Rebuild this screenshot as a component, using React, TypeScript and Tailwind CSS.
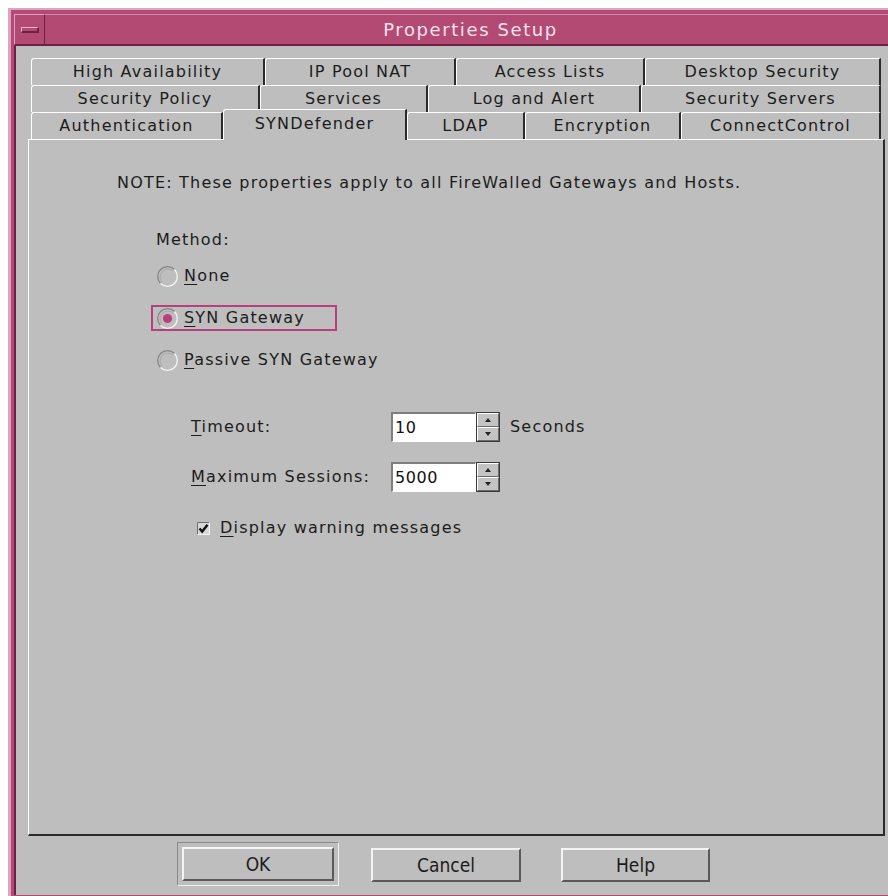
const ui = "font-['DejaVu_Sans',sans-serif]";

type Tab = { label: string; w: string; active?: boolean };

const row1: Tab[] = [
  { label: "High Availability", w: "w-[234px]" },
  { label: "IP Pool NAT", w: "w-[191px]" },
  { label: "Access Lists", w: "w-[189px]" },
  { label: "Desktop Security", w: "w-[236px]" },
];

const row2: Tab[] = [
  { label: "Security Policy", w: "w-[229px]" },
  { label: "Services", w: "w-[168px]" },
  { label: "Log and Alert", w: "w-[213px]" },
  { label: "Security Servers", w: "w-[240px]" },
];

const row3: Tab[] = [
  { label: "Authentication", w: "w-[192px]" },
  { label: "SYNDefender", w: "w-[184px]", active: true },
  { label: "LDAP", w: "w-[118px]" },
  { label: "Encryption", w: "w-[156px]" },
  { label: "ConnectControl", w: "w-[200px]" },
];

const TabButton = ({ tab }: { tab: Tab }) => {
  if (tab.active) {
    return (
      <div
        className={`${tab.w} relative top-[1px] z-10 flex h-[31px] items-center justify-center rounded-tl-[3px] border-l border-t border-r-2 border-l-white border-t-white border-r-[#2b2b2b] bg-[#bebebe] pb-[2px] text-[16px] tracking-[1.2px] text-[#1c1c1c]`}
      >
        {tab.label}
      </div>
    );
  }
  return (
    <div
      className={`${tab.w} flex h-[27px] items-center justify-center rounded-tl-[3px] border-l border-t border-r-2 border-l-white border-t-white border-r-[#2b2b2b] bg-[#bebebe] text-[16px] tracking-[1.2px] text-[#1c1c1c]`}
    >
      {tab.label}
    </div>
  );
};

const Radio = ({ checked }: { checked?: boolean }) => (
  <svg width="21" height="21" viewBox="0 0 21 21" className="shrink-0">
    <path d="M3.5 17.5 A9.9 9.9 0 0 1 17.5 3.5" stroke="#858585" strokeWidth="1.3" fill="none" />
    <path d="M17.5 3.5 A9.9 9.9 0 0 1 3.5 17.5" stroke="#f5f5f5" strokeWidth="1.3" fill="none" />
    <path d="M5 16 A7.8 7.8 0 0 1 16 5" stroke="#a8a8a8" strokeWidth="1" fill="none" />
    {checked && <circle cx="10.5" cy="10.5" r="4.6" fill="#b8407a" />}
  </svg>
);

const SpinBox = ({ value }: { value: string }) => (
  <div className="flex h-[30px]">
    <div className="flex w-[85px] items-center border-l-2 border-t-2 border-b border-r border-l-[#7e7e7e] border-t-[#7e7e7e] border-b-white border-r-white bg-white pl-[2px] text-[16px] tracking-[0.6px] text-[#111]">
      {value}
    </div>
    <div className="flex w-[24px] flex-col border border-[#3a3a3a]">
      <div className="flex flex-1 items-center justify-center border-b border-l border-t border-r border-l-white border-t-white border-b-[#6a6a6a] border-r-[#6a6a6a] bg-[#c4c4c4]">
        <svg width="6" height="4" viewBox="0 0 6 4">
          <path d="M3 0 L6 4 L0 4 Z" fill="#222" />
        </svg>
      </div>
      <div className="flex flex-1 items-center justify-center border-b border-l border-t border-r border-l-white border-t-white border-b-[#6a6a6a] border-r-[#6a6a6a] bg-[#c4c4c4]">
        <svg width="6" height="4" viewBox="0 0 6 4">
          <path d="M0 0 L6 0 L3 4 Z" fill="#222" />
        </svg>
      </div>
    </div>
  </div>
);

const PushButton = ({ label, w }: { label: string; w: string }) => (
  <div
    className={`${w} flex h-[34px] items-center justify-center border-l-2 border-t-2 border-b-2 border-r-2 border-l-[#f4f4f4] border-t-[#f4f4f4] border-b-[#5a5a5a] border-r-[#5a5a5a] bg-[#bebebe] font-['DejaVu_Sans_Condensed','Liberation_Sans_Narrow','Liberation_Sans',sans-serif] text-[19px] text-[#1c1c1c]`}
  >
    {label}
  </div>
);

export default function App() {
  return (
    <div className={`${ui} h-[896px] w-[888px] overflow-hidden bg-white`}>
      <div className="ml-2 mt-2 h-[888px] border-l-[3px] border-t-2 border-[#dca4c0] bg-[#b24a74] pl-[3px] pt-[4px]">
        {/* title row */}
        <div className="flex h-[31px]">
          <div className="flex w-[31px] items-center justify-center border-b border-l border-r border-t border-b-[#6b2244] border-l-[#dfa0bd] border-r-[#6b2244] border-t-[#dfa0bd]">
            <div className="h-[6px] w-[18px] border-b-2 border-l border-r-2 border-t border-b-[#6b2244] border-l-[#e8b4cc] border-r-[#6b2244] border-t-[#e8b4cc] bg-[#b24a74]" />
          </div>
          <div className="flex flex-1 items-center justify-center border-b border-t border-b-[#6b2244] border-t-[#cf86a6] pl-[8px] text-[18px] tracking-[1.6px] text-[#f6e2ec]">
            Properties Setup
          </div>
        </div>

        {/* client area */}
        <div className="flex h-[850px] flex-col border-l-2 border-t border-l-[#6b2244] border-t-[#6b2244] bg-[#bebebe] pl-[12px] pt-[12px]">
          <div className="ml-[3px] flex flex-col">
            <div className="flex">
              {row1.map((t) => (
                <TabButton key={t.label} tab={t} />
              ))}
            </div>
            <div className="flex">
              {row2.map((t) => (
                <TabButton key={t.label} tab={t} />
              ))}
            </div>
            <div className="-mt-[4px] flex items-end">
              {row3.map((t) => (
                <TabButton key={t.label} tab={t} />
              ))}
            </div>
          </div>

          {/* tab page */}
          <div className="flex h-[697px] w-[857px] flex-col border-l border-t border-b-2 border-r-2 border-l-white border-t-white border-b-[#2b2b2b] border-r-[#2b2b2b] text-[16px] tracking-[1.2px] text-[#1c1c1c]">
            <div className="ml-[88px] mt-[31px] flex h-[24px] items-center">
              NOTE: These properties apply to all FireWalled Gateways and Hosts.
            </div>
            <div className="ml-[127px] mt-[33px] flex h-[24px] items-center">Method:</div>

            <div className="ml-[122px] mt-[11px] flex h-[26px] items-center self-start border-2 border-transparent pl-[4px] pr-[6px]">
              <Radio />
              <span className="ml-[6px]">
                <span className="underline underline-offset-[3px]">N</span>one
              </span>
            </div>
            <div className="ml-[122px] mt-[16px] flex h-[26px] w-[186px] items-center border-2 border-[#b8407a] pl-[4px]">
              <Radio checked />
              <span className="ml-[6px]">
                <span className="underline underline-offset-[3px]">S</span>YN Gateway
              </span>
            </div>
            <div className="ml-[122px] mt-[16px] flex h-[26px] items-center self-start border-2 border-transparent pl-[4px] pr-[6px]">
              <Radio />
              <span className="ml-[6px]">
                <span className="underline underline-offset-[3px]">P</span>assive SYN Gateway
              </span>
            </div>

            <div className="ml-[162px] mt-[39px] flex items-center">
              <div className="w-[200px]">
                <span className="underline underline-offset-[3px]">T</span>imeout:
              </div>
              <SpinBox value="10" />
              <span className="ml-[10px]">Seconds</span>
            </div>
            <div className="ml-[162px] mt-[20px] flex items-center">
              <div className="w-[200px]">
                <span className="underline underline-offset-[3px]">M</span>aximum Sessions:
              </div>
              <SpinBox value="5000" />
            </div>

            <div className="ml-[168px] mt-[26px] flex h-[20px] items-center">
              <svg width="13" height="13" viewBox="0 0 13 13" className="shrink-0">
                <rect x="0" y="0" width="13" height="13" fill="#d8d8d8" />
                <path d="M0.5 12.5 V0.5 H12.5" stroke="#6e6e6e" fill="none" />
                <path d="M12.5 0.5 V12.5 H0.5" stroke="#f4f4f4" fill="none" />
                <path d="M2.5 6.5 L5.2 9.6 L10.5 2.8" stroke="#111" strokeWidth="2.4" fill="none" />
              </svg>
              <span className="ml-[10px]">
                <span className="underline underline-offset-[3px]">D</span>isplay warning messages
              </span>
            </div>
          </div>

          {/* dialog buttons */}
          <div className="mt-[6px] flex items-start">
            <div className="ml-[149px] border border-b-[#f0f0f0] border-l-[#8a8a8a] border-r-[#f0f0f0] border-t-[#8a8a8a] p-[4px]">
              <PushButton label="OK" w="w-[152px]" />
            </div>
            <div className="ml-[32px] mt-[6px]">
              <PushButton label="Cancel" w="w-[150px]" />
            </div>
            <div className="ml-[40px] mt-[6px]">
              <PushButton label="Help" w="w-[149px]" />
            </div>
          </div>
        </div>
      </div>
    </div>
  );
}
